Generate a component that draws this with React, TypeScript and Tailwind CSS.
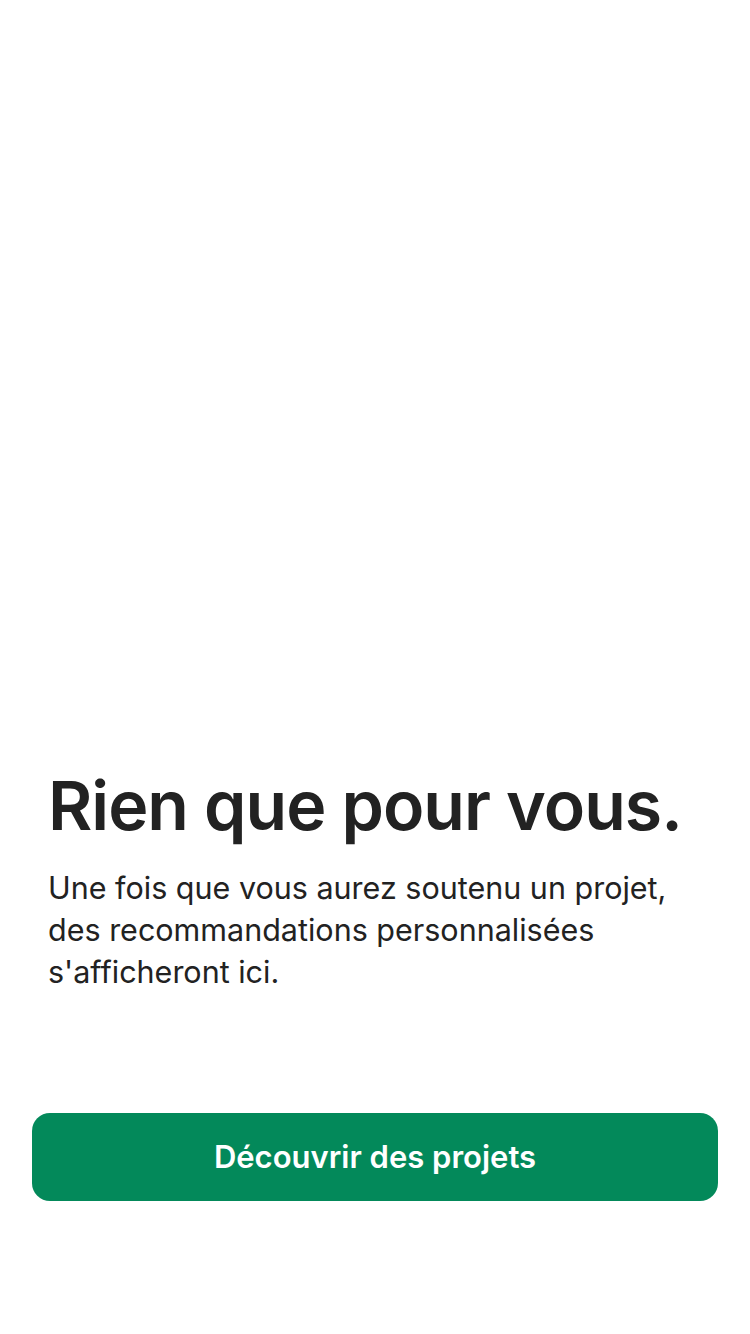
import React from 'react';

const App: React.FC = () => {
  return (
    <div
      className="flex flex-col justify-end h-[1334px] w-full bg-white pb-[133px]"
      style={{ fontFamily: 'Inter, "Noto Sans", sans-serif' }}
    >
      {/* Empty state copy */}
      <div className="px-12">
        <h1 className="text-[68px] leading-[80px] font-semibold tracking-[-1px] text-[#222222]">
          Rien que pour vous.
        </h1>
        <p className="mt-[22px] text-[30.5px] leading-[42px] text-[#222222]">
          Une fois que vous aurez soutenu un projet, des recommandations personnalisées s'afficheront ici.
        </p>
      </div>

      <div className="px-8 mt-[120px]">
        <button className="w-full h-[88px] rounded-[18px] bg-[#03895A] text-white text-[31px] font-semibold">
          Découvrir des projets
        </button>
      </div>
    </div>
  );
};

export default App;
